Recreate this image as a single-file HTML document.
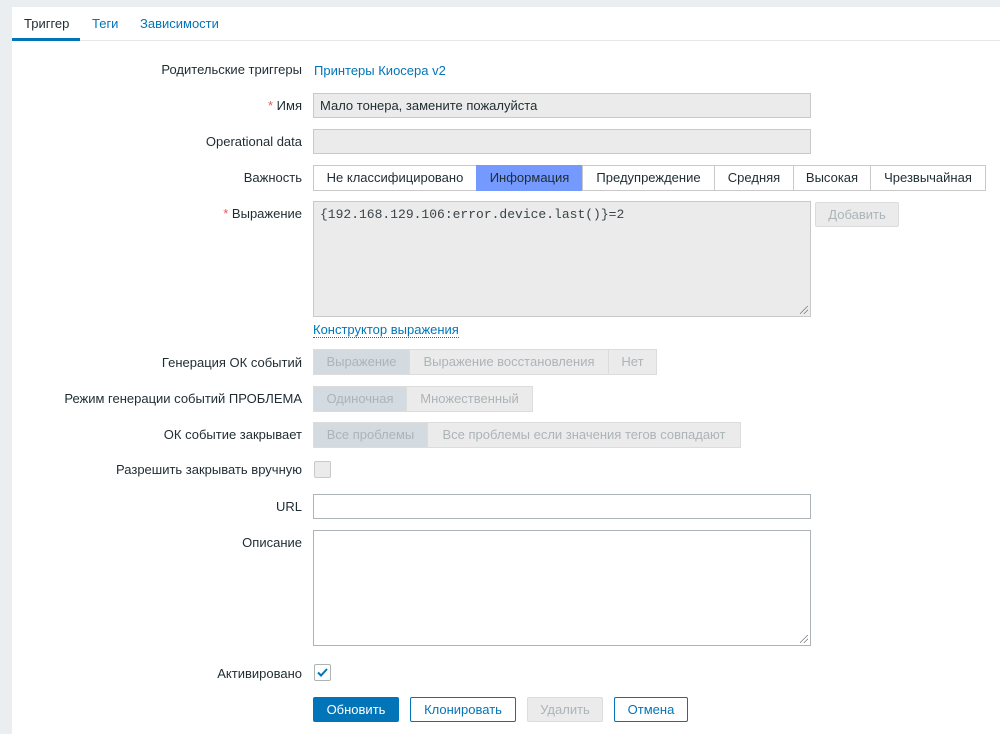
<!DOCTYPE html>
<html><head><meta charset="utf-8"><style>
*{box-sizing:border-box;margin:0;padding:0}
body{width:1000px;height:734px;background:#ebeef0;font-family:"Liberation Sans",Arial,sans-serif;font-size:13px;color:#1f2c33;position:relative;overflow:hidden}
.panel{position:absolute;left:12px;top:7px;width:988px;height:727px;background:#fff}
.a{position:absolute}
.lbl{position:absolute;right:698px;text-align:right;white-space:nowrap;line-height:14px}
.req{color:#e45959}
.inp{position:absolute;left:313px;width:498px;height:25px;border:1px solid #c9c9c9;background:#fff}
.ro{background:#ebebeb}
.seg{position:absolute;display:flex;height:26px}
.seg div{border:1px solid #c9c9c9;margin-left:-1px;padding:0;text-align:center;line-height:24px;white-space:nowrap;background:#fff}
.seg.dis div{background:#ebebeb;color:#acb4b8;border-color:#dcdcdc}
.seg.dis div.on{background:#d3dbe0}
.btn{position:absolute;height:25px;line-height:23px;text-align:center;border:1px solid #0275b8;color:#0275b8;background:#fff;border-radius:2px}
.grip{position:absolute;right:2px;bottom:2px;width:8px;height:8px;background:linear-gradient(135deg,transparent 45%,#777 45%,#777 52%,transparent 52%,transparent 70%,#777 70%,#777 77%,transparent 77%)}
.cb{position:absolute;left:314px;width:17px;height:17px;border:1px solid #c9c9c9;border-radius:2px;background:#ebebeb}
</style></head><body>
<div class="panel"></div>
<div class="a" style="left:24px;top:16px;color:#1f2c33">Триггер</div>
<div class="a" style="left:92px;top:16px;color:#0275b8">Теги</div>
<div class="a" style="left:140px;top:16px;color:#0275b8">Зависимости</div>
<div class="a" style="left:12px;top:40px;width:988px;height:1px;background:#e6e6e6"></div>
<div class="a" style="left:12px;top:38px;width:68px;height:3px;background:#0275b8"></div>

<div class="lbl" style="top:63px">Родительские триггеры</div>
<div class="a" style="left:314px;top:63px;color:#0275b8">Принтеры Киосера v2</div>

<div class="lbl" style="top:99px"><span class="req">*</span> Имя</div>
<div class="inp ro" style="top:93px;padding:4px 6px">Мало тонера, замените пожалуйста</div>

<div class="lbl" style="top:135px">Operational data</div>
<div class="inp ro" style="top:129px"></div>

<div class="lbl" style="top:171px">Важность</div>
<div class="seg" style="left:314px;top:165px">
<div style="width:164px">Не классифицировано</div>
<div style="width:107px;background:#7499ff;border-color:#7499ff">Информация</div>
<div style="width:133px">Предупреждение</div>
<div style="width:80px">Средняя</div>
<div style="width:78px">Высокая</div>
<div style="width:116px">Чрезвычайная</div>
</div>

<div class="lbl" style="top:207px"><span class="req">*</span> Выражение</div>
<div class="inp ro" style="top:201px;height:116px;padding:5px 6px;font-family:'Liberation Mono',monospace;font-size:13px;color:#3a4448">{192.168.129.106:error.device.last()}=2<div class="grip"></div></div>
<div class="btn" style="left:815px;top:202px;width:84px;background:#ebebeb;border-color:#dcdcdc;color:#acb4b8">Добавить</div>
<div class="a" style="left:313px;top:323px;color:#0275b8;border-bottom:1px dotted #0275b8;line-height:14px">Конструктор выражения</div>

<div class="lbl" style="top:356px">Генерация ОК событий</div>
<div class="seg dis" style="left:314px;top:349px">
<div class="on" style="width:97px">Выражение</div>
<div style="width:200px">Выражение восстановления</div>
<div style="width:49px">Нет</div>
</div>

<div class="lbl" style="top:392px">Режим генерации событий ПРОБЛЕМА</div>
<div class="seg dis" style="left:314px;top:386px">
<div class="on" style="width:94px">Одиночная</div>
<div style="width:127px">Множественный</div>
</div>

<div class="lbl" style="top:428px">ОК событие закрывает</div>
<div class="seg dis" style="left:314px;top:422px">
<div class="on" style="width:115px">Все проблемы</div>
<div style="width:314px">Все проблемы если значения тегов совпадают</div>
</div>

<div class="lbl" style="top:463px">Разрешить закрывать вручную</div>
<div class="cb" style="top:461px"></div>

<div class="lbl" style="top:500px">URL</div>
<div class="inp" style="top:494px;border-color:#acb4b8"></div>

<div class="lbl" style="top:536px">Описание</div>
<div class="inp" style="top:530px;height:116px;border-color:#acb4b8"><div class="grip"></div></div>

<div class="lbl" style="top:667px">Активировано</div>
<div class="cb" style="top:664px;background:#fff;border-color:#acb4b8">
<svg width="15" height="15" viewBox="0 0 15 15" style="position:absolute;left:0;top:0"><path d="M3 7.5 L6 10.5 L12 4" fill="none" stroke="#0275b8" stroke-width="2"/></svg></div>

<div class="btn" style="left:313px;top:697px;width:86px;background:#0275b8;color:#fff">Обновить</div>
<div class="btn" style="left:410px;top:697px;width:106px">Клонировать</div>
<div class="btn" style="left:527px;top:697px;width:76px;background:#ebebeb;border-color:#dcdcdc;color:#acb4b8">Удалить</div>
<div class="btn" style="left:614px;top:697px;width:74px">Отмена</div>
</body></html>
